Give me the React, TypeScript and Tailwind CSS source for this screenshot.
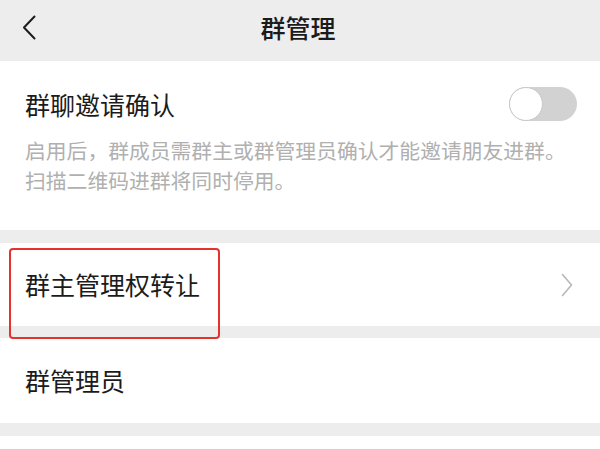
import React from "react";

const font = { fontFamily: '"Noto Sans CJK SC", "Noto Sans", sans-serif' };

const BackIcon = () => (
  <svg width="14" height="25" viewBox="0 0 14 25" fill="none">
    <path d="M12.5 1.5 L2 12.5 L12.5 23.5" stroke="#1c1c1c" strokeWidth="2" strokeLinecap="round" strokeLinejoin="round" />
  </svg>
);

const ChevronRight = () => (
  <svg width="12" height="24" viewBox="0 0 12 24" fill="none">
    <path d="M1.5 1.5 L10.5 12 L1.5 22.5" stroke="#b8b8b8" strokeWidth="1.6" strokeLinecap="round" strokeLinejoin="round" />
  </svg>
);

const Toggle = () => (
  <div className="flex h-[34px] w-[68px] items-center rounded-full bg-[#d2d2d2]">
    <div className="h-[34px] w-[34px] rounded-full border border-[#c8c8c8] bg-white" />
  </div>
);

export default function App() {
  return (
    <div className="min-h-[449px] w-[600px] bg-white text-[#1b1b1b]" style={font}>
      {/* Header */}
      <div className="flex h-[61px] items-center bg-[#ededed] pb-[7px]">
        <div className="flex w-[80px] items-center pl-[22px]">
          <BackIcon />
        </div>
        <div className="flex-1 pr-[4px] text-center text-[25px] font-medium leading-none">群管理</div>
        <div className="w-[80px]" />
      </div>

      {/* Invite confirm */}
      <div className="bg-white pt-[26px] pb-[35px] pl-[25px] pr-[23px]">
        <div className="flex h-[34px] items-center justify-between">
          <span className="text-[25px] leading-none">群聊邀请确认</span>
          <Toggle />
        </div>
        <div className="mt-[14px] text-[20.8px] leading-[30px] text-[#b0b0b0]">
          <div>启用后，群成员需群主或群管理员确认才能邀请朋友进群。</div>
          <div>扫描二维码进群将同时停用。</div>
        </div>
      </div>

      <div className="h-[13px] bg-[#ededed]" />

      {/* Transfer owner */}
      <div className="relative">
        <div className="flex h-[83px] items-center justify-between bg-white pl-[25px] pr-[27px]">
          <span className="text-[25px] leading-none">群主管理权转让</span>
          <ChevronRight />
        </div>
        <div className="h-[12px] bg-[#ededed]" />
        <div className="absolute left-[9px] top-[5px] h-[91px] w-[211px] rounded-[4px] border-2 border-[#e5322d]" />
      </div>

      {/* Admins */}
      <div className="flex h-[85px] items-center bg-white pl-[25px]">
        <span className="text-[25px] leading-none">群管理员</span>
      </div>

      <div className="h-[13px] bg-[#ededed]" />
      <div className="h-[13px] bg-white" />
    </div>
  );
}
